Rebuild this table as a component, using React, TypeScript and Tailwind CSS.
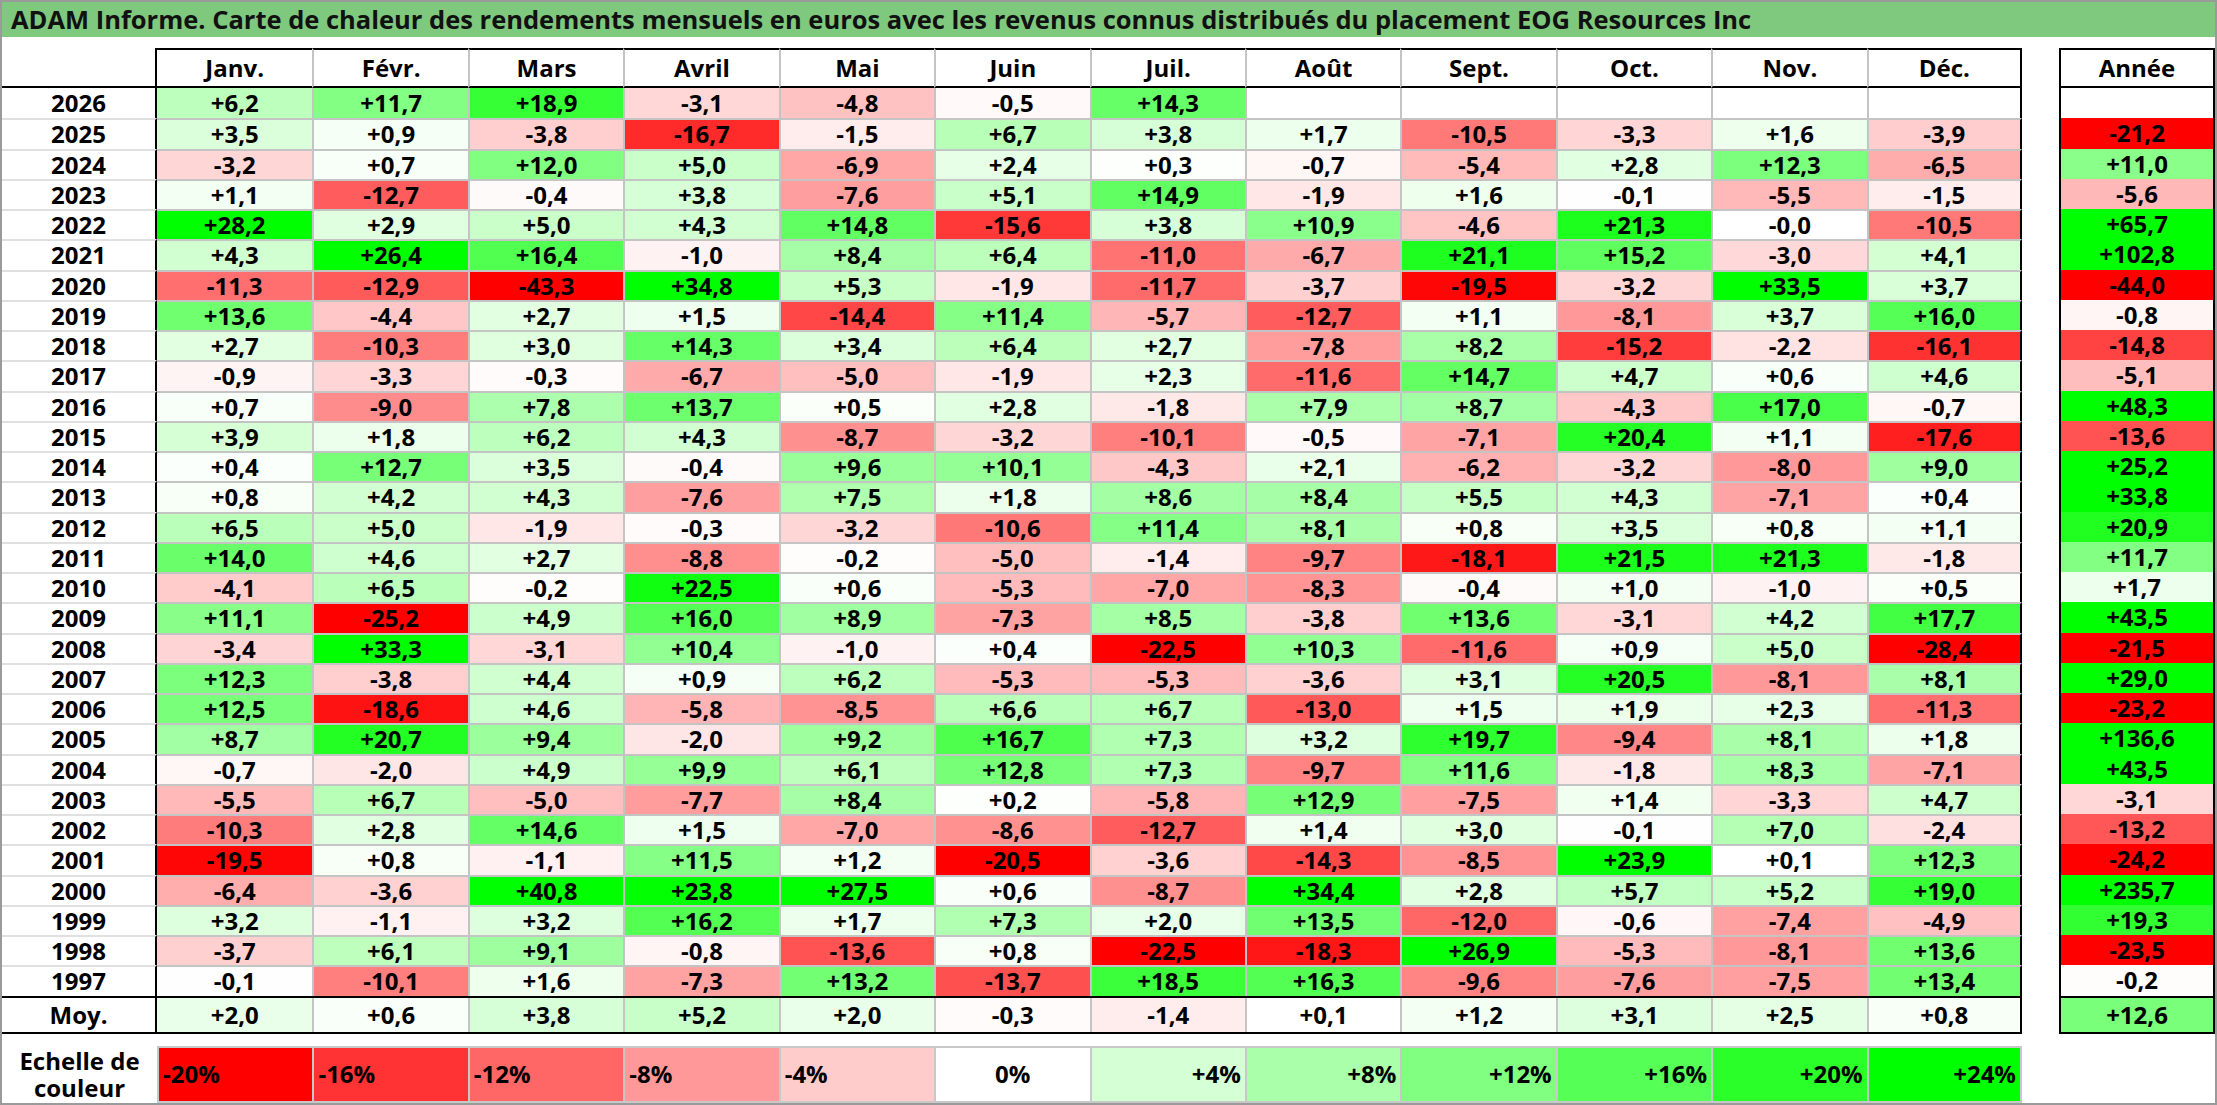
import React from "react";

const MONTHS = ["Janv.", "Févr.", "Mars", "Avril", "Mai", "Juin", "Juil.", "Août", "Sept.", "Oct.", "Nov.", "Déc."];

const RAW: [string, string, string][] = [
  ["2026", "+6,2 +11,7 +18,9 -3,1 -4,8 -0,5 +14,3 _ _ _ _ _", "_"],
  ["2025", "+3,5 +0,9 -3,8 -16,7 -1,5 +6,7 +3,8 +1,7 -10,5 -3,3 +1,6 -3,9", "-21,2"],
  ["2024", "-3,2 +0,7 +12,0 +5,0 -6,9 +2,4 +0,3 -0,7 -5,4 +2,8 +12,3 -6,5", "+11,0"],
  ["2023", "+1,1 -12,7 -0,4 +3,8 -7,6 +5,1 +14,9 -1,9 +1,6 -0,1 -5,5 -1,5", "-5,6"],
  ["2022", "+28,2 +2,9 +5,0 +4,3 +14,8 -15,6 +3,8 +10,9 -4,6 +21,3 -0,0 -10,5", "+65,7"],
  ["2021", "+4,3 +26,4 +16,4 -1,0 +8,4 +6,4 -11,0 -6,7 +21,1 +15,2 -3,0 +4,1", "+102,8"],
  ["2020", "-11,3 -12,9 -43,3 +34,8 +5,3 -1,9 -11,7 -3,7 -19,5 -3,2 +33,5 +3,7", "-44,0"],
  ["2019", "+13,6 -4,4 +2,7 +1,5 -14,4 +11,4 -5,7 -12,7 +1,1 -8,1 +3,7 +16,0", "-0,8"],
  ["2018", "+2,7 -10,3 +3,0 +14,3 +3,4 +6,4 +2,7 -7,8 +8,2 -15,2 -2,2 -16,1", "-14,8"],
  ["2017", "-0,9 -3,3 -0,3 -6,7 -5,0 -1,9 +2,3 -11,6 +14,7 +4,7 +0,6 +4,6", "-5,1"],
  ["2016", "+0,7 -9,0 +7,8 +13,7 +0,5 +2,8 -1,8 +7,9 +8,7 -4,3 +17,0 -0,7", "+48,3"],
  ["2015", "+3,9 +1,8 +6,2 +4,3 -8,7 -3,2 -10,1 -0,5 -7,1 +20,4 +1,1 -17,6", "-13,6"],
  ["2014", "+0,4 +12,7 +3,5 -0,4 +9,6 +10,1 -4,3 +2,1 -6,2 -3,2 -8,0 +9,0", "+25,2"],
  ["2013", "+0,8 +4,2 +4,3 -7,6 +7,5 +1,8 +8,6 +8,4 +5,5 +4,3 -7,1 +0,4", "+33,8"],
  ["2012", "+6,5 +5,0 -1,9 -0,3 -3,2 -10,6 +11,4 +8,1 +0,8 +3,5 +0,8 +1,1", "+20,9"],
  ["2011", "+14,0 +4,6 +2,7 -8,8 -0,2 -5,0 -1,4 -9,7 -18,1 +21,5 +21,3 -1,8", "+11,7"],
  ["2010", "-4,1 +6,5 -0,2 +22,5 +0,6 -5,3 -7,0 -8,3 -0,4 +1,0 -1,0 +0,5", "+1,7"],
  ["2009", "+11,1 -25,2 +4,9 +16,0 +8,9 -7,3 +8,5 -3,8 +13,6 -3,1 +4,2 +17,7", "+43,5"],
  ["2008", "-3,4 +33,3 -3,1 +10,4 -1,0 +0,4 -22,5 +10,3 -11,6 +0,9 +5,0 -28,4", "-21,5"],
  ["2007", "+12,3 -3,8 +4,4 +0,9 +6,2 -5,3 -5,3 -3,6 +3,1 +20,5 -8,1 +8,1", "+29,0"],
  ["2006", "+12,5 -18,6 +4,6 -5,8 -8,5 +6,6 +6,7 -13,0 +1,5 +1,9 +2,3 -11,3", "-23,2"],
  ["2005", "+8,7 +20,7 +9,4 -2,0 +9,2 +16,7 +7,3 +3,2 +19,7 -9,4 +8,1 +1,8", "+136,6"],
  ["2004", "-0,7 -2,0 +4,9 +9,9 +6,1 +12,8 +7,3 -9,7 +11,6 -1,8 +8,3 -7,1", "+43,5"],
  ["2003", "-5,5 +6,7 -5,0 -7,7 +8,4 +0,2 -5,8 +12,9 -7,5 +1,4 -3,3 +4,7", "-3,1"],
  ["2002", "-10,3 +2,8 +14,6 +1,5 -7,0 -8,6 -12,7 +1,4 +3,0 -0,1 +7,0 -2,4", "-13,2"],
  ["2001", "-19,5 +0,8 -1,1 +11,5 +1,2 -20,5 -3,6 -14,3 -8,5 +23,9 +0,1 +12,3", "-24,2"],
  ["2000", "-6,4 -3,6 +40,8 +23,8 +27,5 +0,6 -8,7 +34,4 +2,8 +5,7 +5,2 +19,0", "+235,7"],
  ["1999", "+3,2 -1,1 +3,2 +16,2 +1,7 +7,3 +2,0 +13,5 -12,0 -0,6 -7,4 -4,9", "+19,3"],
  ["1998", "-3,7 +6,1 +9,1 -0,8 -13,6 +0,8 -22,5 -18,3 +26,9 -5,3 -8,1 +13,6", "-23,5"],
  ["1997", "-0,1 -10,1 +1,6 -7,3 +13,2 -13,7 +18,5 +16,3 -9,6 -7,6 -7,5 +13,4", "-0,2"],
];

const MOY = "+2,0 +0,6 +3,8 +5,2 +2,0 -0,3 -1,4 +0,1 +1,2 +3,1 +2,5 +0,8".split(" ");
const MOY_YEAR = "+12,6";

const LEGEND = [
  { label: "-20%", v: -20, align: "justify-start pl-[4px]" },
  { label: "-16%", v: -16, align: "justify-start pl-[4px]" },
  { label: "-12%", v: -12, align: "justify-start pl-[4px]" },
  { label: "-8%", v: -8, align: "justify-start pl-[4px]" },
  { label: "-4%", v: -4, align: "justify-start pl-[4px]" },
  { label: "0%", v: 0, align: "justify-center" },
  { label: "+4%", v: 4, align: "justify-end pr-[4px]" },
  { label: "+8%", v: 8, align: "justify-end pr-[4px]" },
  { label: "+12%", v: 12, align: "justify-end pr-[4px]" },
  { label: "+16%", v: 16, align: "justify-end pr-[4px]" },
  { label: "+20%", v: 20, align: "justify-end pr-[4px]" },
  { label: "+24%", v: 24, align: "justify-end pr-[4px]" },
];

function heat(v: number): string {
  if (v >= 0) {
    const t = Math.min(v / 24, 1);
    const c = Math.round(255 * (1 - t));
    return `rgb(${c},255,${c})`;
  }
  const t = Math.min(-v / 20, 1);
  const c = Math.round(255 * (1 - t));
  return `rgb(255,${c},${c})`;
}

function bgOf(s: string): string {
  if (s === "_") return "#ffffff";
  return heat(parseFloat(s.replace(",", ".")));
}

const GRID = "grid grid-cols-[155px_repeat(12,minmax(0,1fr))]";

export default function App() {
  return (
    <div className="w-[2217px] h-[1105px] border-2 border-[#9a9a9a] bg-white overflow-hidden font-['Open_Sans',sans-serif] font-bold text-black">
      <div className="h-[35px] bg-[#7fc97f] flex items-center pl-[9px] text-[25.5px] leading-none text-[#111]">
        ADAM Informe. Carte de chaleur des rendements mensuels en euros avec les revenus connus distribués du placement EOG Resources Inc
      </div>
      <div className="h-[11px]" />
      <div className="flex text-[24px] leading-none">
        <div className="w-[2020px] shrink-0">
          {/* header */}
          <div className={`${GRID} h-[40px]`}>
            <div className="border-r-2 border-b-2 border-black" />
            {MONTHS.map((m, j) => (
              <div
                key={m}
                className={`flex items-center justify-center border-t-2 border-b-2 border-black ${j > 0 ? "border-l-2 border-l-[#c4c4c4]" : ""} ${j === 11 ? "border-r-2 border-r-black" : ""}`}
              >
                {m}
              </div>
            ))}
          </div>
          {/* data rows */}
          {RAW.map(([year, vals], i) => {
            const cells = vals.split(" ");
            return (
              <div key={year} className={`${GRID} h-[30.25px]`}>
                <div
                  className={`flex items-center justify-center border-r-2 border-r-black ${i > 0 ? "border-t-2 border-t-[#e0e0e0]" : ""}`}
                >
                  {year}
                </div>
                {cells.map((c, j) => (
                  <div
                    key={j}
                    style={{ backgroundColor: bgOf(c) }}
                    className={`flex items-center justify-center ${i > 0 ? "border-t-2 border-t-[#c4c4c4]" : ""} ${j > 0 ? "border-l-2 border-l-[#c4c4c4]" : ""} ${j === 11 ? "border-r-2 border-r-black" : ""}`}
                  >
                    {c === "_" ? "" : c}
                  </div>
                ))}
              </div>
            );
          })}
          {/* moyenne */}
          <div className={`${GRID} h-[38px] border-t-2 border-b-2 border-black`}>
            <div className="flex items-center justify-center border-r-2 border-r-black">Moy.</div>
            {MOY.map((c, j) => (
              <div
                key={j}
                style={{ backgroundColor: bgOf(c) }}
                className={`flex items-center justify-center ${j > 0 ? "border-l-2 border-l-[#c4c4c4]" : ""} ${j === 11 ? "border-r-2 border-r-black" : ""}`}
              >
                {c}
              </div>
            ))}
          </div>
          <div className="h-[12px]" />
          {/* legend */}
          <div className={`${GRID} h-[57px]`}>
            <div className="flex flex-col items-center justify-center leading-[27px]">
              <span>Echelle de</span>
              <span>couleur</span>
            </div>
            {LEGEND.map((l, j) => (
              <div
                key={l.label}
                style={{ backgroundColor: heat(l.v) }}
                className={`flex items-center ${l.align} border-y-2 border-l-2 border-[#c8c8c8] ${j === 11 ? "border-r-2" : ""}`}
              >
                {l.label}
              </div>
            ))}
          </div>
        </div>
        <div className="w-[37px] shrink-0" />
        <div className="w-[156px] shrink-0">
          <div className="h-[40px] border-2 border-black flex items-center justify-center">Année</div>
          {RAW.map(([year, , annee]) => (
            <div
              key={year}
              style={{ backgroundColor: bgOf(annee) }}
              className="h-[30.25px] border-x-2 border-black flex items-center justify-center"
            >
              {annee === "_" ? "" : annee}
            </div>
          ))}
          <div
            style={{ backgroundColor: bgOf(MOY_YEAR) }}
            className="h-[38px] border-2 border-black flex items-center justify-center"
          >
            {MOY_YEAR}
          </div>
        </div>
      </div>
    </div>
  );
}
